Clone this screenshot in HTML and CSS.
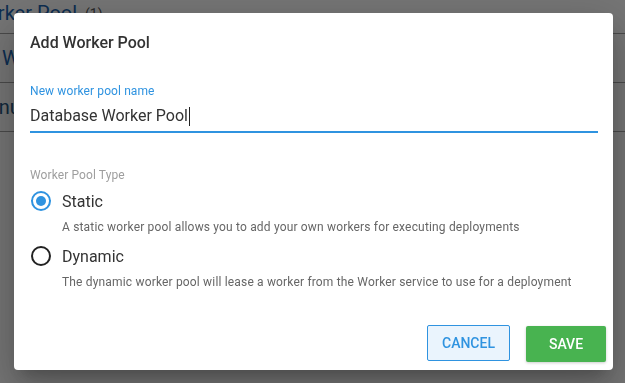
FILE: index.html
```html
<!DOCTYPE html>
<html lang="en">
<head>
  <meta charset="UTF-8">
  <title>Add Worker Pool</title>
  <link rel="stylesheet" href="styles.css">
</head>
<body>
  <div class="page">
    <div class="page-row heading"><span class="pool-link cut-wo">Worker Pool</span><span class="count">(1)</span></div>
    <div class="page-row"><span class="pool-link">Worker pool</span></div>
    <div class="page-row"><span class="pool-text cut-li">Linux workers</span></div>
  </div>

  <div class="overlay">
    <div class="dialog">
      <h1 class="dialog-title">Add Worker Pool</h1>

      <div class="field">
        <label class="field-label">New worker pool name</label>
        <div class="field-input">Database Worker Pool<span class="caret"></span></div>
      </div>

      <div class="pool-type">
        <div class="type-label">Worker Pool Type</div>

        <div class="option">
          <span class="radio checked"></span>
          <span class="option-name">Static</span>
        </div>
        <div class="option-help">A static worker pool allows you to add your own workers for executing deployments</div>

        <div class="option">
          <span class="radio"></span>
          <span class="option-name">Dynamic</span>
        </div>
        <div class="option-help">The dynamic worker pool will lease a worker from the Worker service to use for a deployment</div>
      </div>

      <div class="actions">
        <button class="btn btn-cancel">Cancel</button>
        <button class="btn btn-save">Save</button>
      </div>
    </div>
  </div>
</body>
</html>
```

FILE: styles.css
```css
* {
  box-sizing: border-box;
}

body {
  margin: 0;
  font-family: Roboto, "Noto Sans", sans-serif;
  background: #f4f4f4;
  overflow: hidden;
}

/* page behind the dialog */
.page {
  overflow: hidden;
}

.page-row {
  height: 49px;
  border-bottom: 1px solid #9a9a9a;
  display: flex;
  align-items: center;
  font-size: 20px;
  white-space: nowrap;
}

.page-row.heading {
  height: 34px;
  align-items: flex-start;
  padding-top: 1px;
}

.pool-link {
  color: #1a5fa8;
  margin-left: 2px;
}

.cut-wo {
  margin-left: -31px;
}

.count {
  font-size: 14px;
  color: #555;
  margin-left: 8px;
  margin-top: 5px;
}

.pool-text {
  color: #24527a;
}

.cut-li {
  margin-left: -17px;
}

.overlay {
  position: fixed;
  inset: 0;
  background: rgba(0, 0, 0, 0.52);
  padding: 13px 12px 0 14px;
}

.dialog {
  width: 599px;
  height: 357px;
  background: #fff;
  border-radius: 4px;
  box-shadow: 0 11px 15px -7px rgba(0, 0, 0, 0.2), 0 24px 38px 3px rgba(0, 0, 0, 0.14), 0 9px 46px 8px rgba(0, 0, 0, 0.12);
  padding: 20px 16px 0 16px;
  display: flex;
  flex-direction: column;
}

.dialog-title {
  margin: 0;
  font-size: 16px;
  font-weight: 500;
  color: #333;
  line-height: 20px;
}

.field {
  margin-top: 31px;
}

.field-label {
  display: block;
  font-size: 12px;
  color: #2f93e0;
  line-height: 14px;
  letter-spacing: 0.1px;
}

.field-input {
  margin-top: 6px;
  font-size: 16px;
  color: #333;
  line-height: 24px;
  padding-bottom: 3px;
  border-bottom: 2px solid #2f93e0;
  width: 568px;
  display: flex;
  align-items: center;
}

.caret {
  display: inline-block;
  width: 1px;
  height: 19px;
  background: #222;
  margin-left: 1px;
}

.pool-type {
  margin-top: 35px;
}

.type-label {
  font-size: 12px;
  color: #9e9e9e;
  line-height: 14px;
  letter-spacing: 0.1px;
}

.option {
  display: flex;
  align-items: center;
  margin-top: 7px;
  height: 24px;
}

.radio {
  width: 20px;
  height: 20px;
  border: 2px solid #222;
  border-radius: 50%;
  margin-left: 1px;
  position: relative;
}

.radio.checked {
  border-color: #2f93e0;
}

.radio.checked::after {
  content: "";
  position: absolute;
  top: 3px;
  left: 3px;
  width: 10px;
  height: 10px;
  border-radius: 50%;
  background: #2f93e0;
}

.option-name {
  margin-left: 11px;
  font-size: 16px;
  color: #333;
}

.option-help {
  margin-left: 32px;
  margin-top: 7px;
  font-size: 12px;
  color: #666;
  line-height: 14px;
  letter-spacing: 0.17px;
}

.option-help + .option {
  margin-top: 10px;
}

.actions {
  margin-top: auto;
  margin-bottom: 8px;
  margin-right: -9px;
  display: flex;
  justify-content: flex-end;
  align-items: flex-start;
  gap: 16px;
}

.btn {
  height: 36px;
  font-family: Roboto, "Noto Sans", sans-serif;
  font-size: 14px;
  font-weight: 500;
  text-transform: uppercase;
  border-radius: 2px;
  cursor: pointer;
}

.btn-cancel {
  width: 83px;
  background: #eaf4fd;
  color: #2f93e0;
  border: 1px solid #2f93e0;
}

.btn-save {
  width: 80px;
  margin-top: 1px;
  background: #48b350;
  color: #fff;
  border: none;
  box-shadow: 0 1px 3px rgba(0, 0, 0, 0.2);
}
```
